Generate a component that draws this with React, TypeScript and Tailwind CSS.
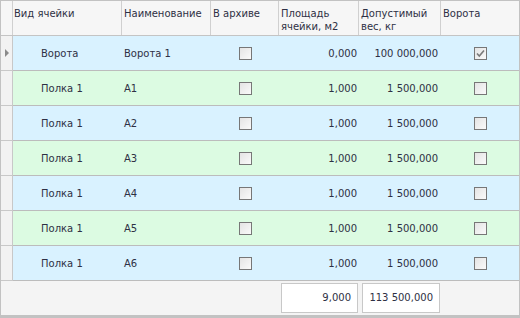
import React from "react";

const rows = [
  { kind: "Ворота", name: "Ворота 1", area: "0,000", weight: "100 000,000", gate: true },
  { kind: "Полка 1", name: "A1", area: "1,000", weight: "1 500,000", gate: false },
  { kind: "Полка 1", name: "A2", area: "1,000", weight: "1 500,000", gate: false },
  { kind: "Полка 1", name: "A3", area: "1,000", weight: "1 500,000", gate: false },
  { kind: "Полка 1", name: "A4", area: "1,000", weight: "1 500,000", gate: false },
  { kind: "Полка 1", name: "A5", area: "1,000", weight: "1 500,000", gate: false },
  { kind: "Полка 1", name: "A6", area: "1,000", weight: "1 500,000", gate: false },
];

const cols = "grid grid-cols-[12px_109px_89px_68px_80px_82px_78px]";

function Check({ checked }: { checked?: boolean }) {
  return (
    <div className="w-[13px] h-[13px] border border-[#777777] bg-gradient-to-br from-[#e4e4e4] to-[#fafafa] flex items-center justify-center">
      {checked && (
        <svg width="11" height="11" viewBox="0 0 11 11">
          <path d="M2 5.5 L4.3 8 L9 2.5" fill="none" stroke="#7a7a7a" strokeWidth="1.6" />
        </svg>
      )}
    </div>
  );
}

export default function App() {
  return (
    <div
      className="w-[520px] h-[318px] bg-white border-t border-l border-r border-b-[3px] border-[#c2c2c2] text-[10px] text-[#2e3044] leading-[12px] overflow-hidden"
      style={{ fontFamily: '"DejaVu Sans", Verdana, sans-serif' }}
    >
      <div className={`${cols} h-[35px] bg-[#f6f6f6] border-b border-[#c4c4c4] leading-[13px]`}>
        <div className="border-r border-[#d0d0d0]" />
        <div className="border-r border-[#d0d0d0] pl-[1px] pt-[6px]">Вид ячейки</div>
        <div className="border-r border-[#d0d0d0] pl-[2px] pt-[6px]">Наименование</div>
        <div className="border-r border-[#d0d0d0] pl-[2px] pt-[6px]">В архиве</div>
        <div className="border-r border-[#d0d0d0] pl-[2px] pt-[6px]">Площадь<br />ячейки, м2</div>
        <div className="border-r border-[#d0d0d0] pl-[2px] pt-[6px]">Допустимый<br />вес, кг</div>
        <div className="pl-[2px] pt-[6px]">Ворота</div>
      </div>
      {rows.map((r, i) => {
        const bg = i % 2 === 0 ? "bg-[#d9f2ff]" : "bg-[#dcfbe2]";
        return (
          <div key={i} className={`${cols} h-[35px]`}>
            <div className="bg-[#f2f2f2] border-r border-b border-[#c8c8c8] flex items-center pl-[4px]">
              {i === 0 && (
                <svg width="5" height="8" viewBox="0 0 5 8">
                  <path d="M0 0 L4 4 L0 8 Z" fill="#8a8a8a" />
                </svg>
              )}
            </div>
            <div className={`${bg} col-span-6 grid grid-cols-[109px_89px_68px_80px_82px_78px] border-b border-[#bcbcbc]`}>
              <div className="flex items-center pl-[28px] pt-[1px]">{r.kind}</div>
              <div className="flex items-center pl-[2px] pt-[1px]">{r.name}</div>
              <div className="flex items-center justify-center pl-[1px]"><Check /></div>
              <div className="flex items-center justify-end pr-[2px] pt-[1px]">{r.area}</div>
              <div className="flex items-center justify-end pr-[3px] pt-[1px]">{r.weight}</div>
              <div className="flex items-center justify-center"><Check checked={r.gate} /></div>
            </div>
          </div>
        );
      })}
      <div className={`${cols} h-[34px] bg-[#f4f4f4]`}>
        <div />
        <div />
        <div />
        <div />
        <div className="pl-[2px] pr-[1px] pt-[2px] pb-[2px]">
          <div className="h-[30px] bg-white border border-[#c8c8c8] flex items-center justify-end pr-[6px]">9,000</div>
        </div>
        <div className="pl-[3px] pr-[1px] pt-[2px] pb-[2px]">
          <div className="h-[30px] bg-white border border-[#c8c8c8] flex items-center justify-end pr-[6px]">113 500,000</div>
        </div>
        <div />
      </div>
    </div>
  );
}
